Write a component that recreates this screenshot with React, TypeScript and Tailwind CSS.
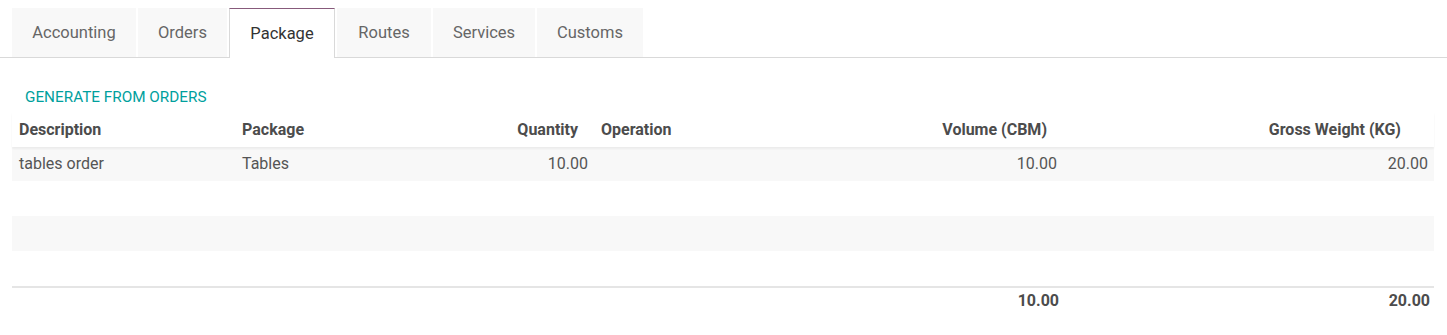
import React from "react";

const tabs = ["Accounting", "Orders", "Package", "Routes", "Services", "Customs"];
const tabW = [124, 89, 106, 94, 102, 106];

const cols = "grid grid-cols-[223px_245px_114px_200px_269px_371px]";

export default function App() {
  return (
    <div
      className="w-[1447px] h-[335px] bg-white text-[#555] overflow-hidden"
      style={{ fontFamily: "Roboto, 'Noto Sans', sans-serif" }}
    >
      <div className="pt-[8px] border-b border-[#d9d9d9] flex pl-[12px] gap-[2px] h-[58px]">
        {tabs.map((t, i) =>
          t === "Package" ? (
            <div
              key={t}
              style={{ width: tabW[i] }}
              className="h-[50px] -mb-px pt-[1px] bg-white border-x border-[#d9d9d9] border-t border-t-[#875a7b] flex items-center justify-center text-[16.5px] text-[#333]"
            >
              {t}
            </div>
          ) : (
            <div
              key={t}
              style={{ width: tabW[i] }}
              className="h-[49px] pt-[2px] bg-[#f8f8f8] flex items-center justify-center text-[16.5px] text-[#666]"
            >
              {t}
            </div>
          )
        )}
      </div>

      <div className="pl-[25px] pt-[29px] h-[54px] text-[15.3px] text-[#00a09d] uppercase leading-[20px]">
        Generate from orders
      </div>

      <div className="mx-[12px] w-[1422px]">
        <div className={`${cols} h-[35px] items-center font-bold text-[16px] text-[#4c4c4c] shadow-[0_2px_2px_rgba(0,0,0,0.05)] relative`}>
          <div className="pl-[7px]">Description</div>
          <div className="pl-[7px]">Package</div>
          <div className="text-right pr-[16px]">Quantity</div>
          <div className="pl-[7px]">Operation</div>
          <div className="text-right pr-[16px]">Volume (CBM)</div>
          <div className="text-right pr-[33px]">Gross Weight (KG)</div>
        </div>
        <div className={`${cols} h-[34px] items-center bg-[#f8f8f8] text-[16px]`}>
          <div className="pl-[7px]">tables order</div>
          <div className="pl-[7px]">Tables</div>
          <div className="text-right pr-[6px]">10.00</div>
          <div></div>
          <div className="text-right pr-[6px]">10.00</div>
          <div className="text-right pr-[6px]">20.00</div>
        </div>
        <div className="h-[35px]"></div>
        <div className="h-[35px] bg-[#f8f8f8]"></div>
        <div className="h-[35px]"></div>
        <div className={`${cols} h-[28px] items-center border-t-2 border-[#e5e5e5] font-bold text-[16px] text-[#4c4c4c]`}>
          <div></div>
          <div></div>
          <div></div>
          <div></div>
          <div className="text-right pr-[4px]">10.00</div>
          <div className="text-right pr-[4px]">20.00</div>
        </div>
      </div>
    </div>
  );
}
